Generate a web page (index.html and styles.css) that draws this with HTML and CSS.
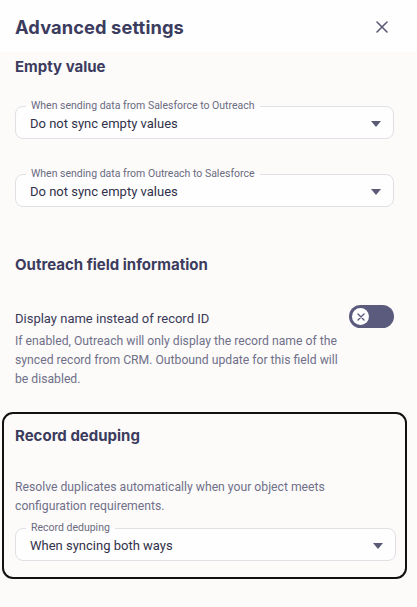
FILE: index.html
```html
<!DOCTYPE html>
<html>
<head>
<meta charset="utf-8">
<link rel="stylesheet" href="styles.css">
</head>
<body>
<div class="panel">
  <header class="header">
    <h1 class="title">Advanced settings</h1>
    <svg class="close" width="14" height="14" viewBox="0 0 14 14"><path d="M2 2 L12 12 M12 2 L2 12" stroke="#5a5a78" stroke-width="1.6" stroke-linecap="round"/></svg>
  </header>
  <div class="content">
    <h2 class="section-title first">Empty value</h2>
    <div class="select s1">
      <span class="select-label">When sending data from Salesforce to Outreach</span>
      <span class="select-value">Do not sync empty values</span>
      <span class="arrow"></span>
    </div>
    <div class="select s2">
      <span class="select-label">When sending data from Outreach to Salesforce</span>
      <span class="select-value">Do not sync empty values</span>
      <span class="arrow"></span>
    </div>
    <h2 class="section-title second">Outreach field information</h2>
    <div class="toggle-row">
      <span class="toggle-name">Display name instead of record ID</span>
      <span class="toggle"><span class="knob"><svg width="8" height="8" viewBox="0 0 8 8"><path d="M1 1 L7 7 M7 1 L1 7" stroke="#5b5b7e" stroke-width="1.4" stroke-linecap="round"/></svg></span></span>
    </div>
    <p class="desc">If enabled, Outreach will only display the record name of the synced record from CRM. Outbound update for this field will be disabled.</p>
  </div>
  <div class="dedupe">
    <h2 class="section-title">Record deduping</h2>
    <p class="desc dedupe-desc">Resolve duplicates automatically when your object meets configuration requirements.</p>
    <div class="select s3">
      <span class="select-label">Record deduping</span>
      <span class="select-value">When syncing both ways</span>
      <span class="arrow"></span>
    </div>
  </div>
</div>
</body>
</html>
```
FILE: styles.css
```css
* { box-sizing: border-box; }
html, body { margin: 0; padding: 0; }
body {
  background: #fcfbfa;
  font-family: Roboto, "Liberation Sans", sans-serif;
  width: 417px;
  height: 607px;
  overflow: hidden;
}
.header {
  height: 52px;
  background: #fefefe;
  display: flex;
  align-items: center;
  justify-content: space-between;
  padding: 2px 28px 0 15px;
}
.title {
  margin: 0;
  font-family: Inter, "Noto Sans", sans-serif;
  font-weight: 700;
  font-size: 18.3px;
  color: #3c3c5e;
  letter-spacing: 0.1px;
}
.close { display: block; }
.content { padding: 0 23px 0 15px; }
.section-title {
  margin: 0;
  font-family: Inter, "Noto Sans", sans-serif;
  font-weight: 700;
  font-size: 15px;
  line-height: 20px;
  color: #3c3c5e;
}
.section-title.first { margin-top: 5px; }
.section-title.second { margin-top: 48px; }
.select {
  position: relative;
  height: 33px;
  border: 1px solid #e1e0e5;
  border-radius: 8px;
  background: #fefefe;
  display: flex;
  align-items: center;
  padding-left: 14px;
}
.s1 { margin-top: 29px; }
.s2 { margin-top: 35px; }
.select-label {
  position: absolute;
  top: -8px;
  left: 10px;
  padding: 0 5px;
  font-size: 10.5px;
  line-height: 14px;
  color: #6a6a80;
  background: linear-gradient(to bottom, #fcfbfa 50%, #fefefe 50%);
}
.select-value {
  font-size: 13px;
  color: #31314a;
  padding-top: 2px;
}
.arrow {
  position: absolute;
  right: 12px;
  top: 14px;
  width: 0;
  height: 0;
  border-left: 5px solid transparent;
  border-right: 5px solid transparent;
  border-top: 6px solid #5a5a76;
}
.toggle-row {
  margin-top: 30px;
  display: flex;
  align-items: center;
  justify-content: space-between;
}
.toggle-name {
  font-size: 13px;
  color: #3a3a58;
  padding-top: 4px;
}
.toggle {
  width: 45px;
  height: 23px;
  border-radius: 12px;
  background: #5b5b7e;
  display: flex;
  align-items: center;
  padding-left: 3px;
}
.knob {
  width: 17px;
  height: 17px;
  border-radius: 50%;
  background: #fff;
  display: flex;
  align-items: center;
  justify-content: center;
}
.knob svg { display: block; }
.desc {
  margin: 4px 0 0 0;
  font-size: 12.2px;
  line-height: 19px;
  color: #707089;
  padding-right: 50px;
}
.dedupe {
  margin: 23px 10px 0 2px;
  border: 2px solid #111;
  border-radius: 11px;
  height: 167px;
  padding: 12px 9px 0 11px;
}
.dedupe-desc {
  margin-top: 32px;
  padding-right: 20px;
}
.s3 { margin-top: 12px; }
```
